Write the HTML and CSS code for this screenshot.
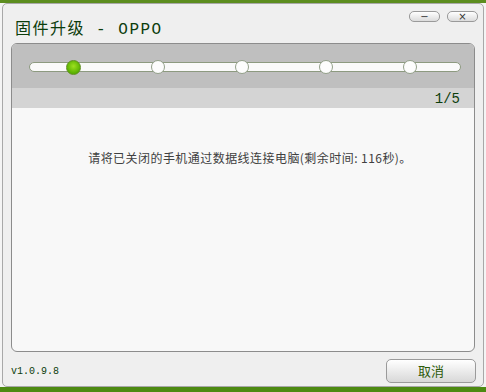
FILE: index.html
```html
<!DOCTYPE html>
<html>
<head>
    <title>固件升级 - OPPO</title>
    <link rel="stylesheet" href="styles.css">
</head>
<body>
    <div class="desktop-top"></div>
    <div class="window">
        <div class="titlebar">
            <span class="title">固件升级 - OPPO</span>
            <div class="win-buttons">
                <button class="win-btn">&minus;</button>
                <button class="win-btn">&times;</button>
            </div>
        </div>

        <div class="panel">
            <div class="steps">
                <div class="track">
                    <span class="knob active"></span>
                    <span class="knob"></span>
                    <span class="knob"></span>
                    <span class="knob"></span>
                    <span class="knob"></span>
                </div>
            </div>
            <div class="step-count">1/5</div>
            <div class="content">
                <p class="message">请将已关闭的手机通过数据线连接电脑(剩余时间: 116秒)。</p>
            </div>
        </div>

        <div class="footer">
            <span class="version">v1.0.9.8</span>
            <button class="cancel">取消</button>
        </div>
    </div>
    <div class="desktop-bottom"></div>
</body>
</html>
```

FILE: styles.css
```css
body {
    margin: 0;
    width: 486px;
    height: 392px;
    background-color: #f4f4f4;
    font-family: "SimSun", "Noto Sans CJK SC", sans-serif;
    overflow: hidden;
}

.desktop-top {
    height: 3px;
    background-color: #5c8d1f;
}

.desktop-bottom {
    height: 5px;
    background-color: #4d8a12;
}

.window {
    height: 384px;
    margin: 0 2px 0 2px;
    background-color: #efefef;
    border: 1px solid #a8a8a8;
    border-radius: 5px;
    box-sizing: border-box;
    display: flex;
    flex-direction: column;
    padding: 0 8px 0 8px;
}

.titlebar {
    display: flex;
    justify-content: space-between;
    align-items: flex-start;
    height: 39px;
}

.title {
    margin: 11px 0 0 4px;
    font-family: "Liberation Mono", "Noto Sans CJK SC", monospace;
    font-size: 16px;
    color: #0c3d0c;
    letter-spacing: 1.5px;
}

.win-buttons {
    display: flex;
    gap: 7px;
    margin-top: 7px;
    margin-right: -3px;
}

.win-btn {
    width: 31px;
    height: 11px;
    padding: 0;
    border: 1px solid #9a9a9a;
    border-radius: 5px;
    background: linear-gradient(#ffffff, #dcdcdc);
    font-family: "DejaVu Sans", sans-serif;
    font-size: 10px;
    line-height: 8px;
    color: #333;
}

.panel {
    flex: 1;
    border: 1px solid #8c8c8c;
    border-radius: 6px;
    background-color: #f8f8f8;
    display: flex;
    flex-direction: column;
    overflow: hidden;
}

.steps {
    height: 44px;
    background-color: #bfbfbf;
    display: flex;
    align-items: center;
    padding: 2px 13px 0 17px;
    box-sizing: border-box;
}

.track {
    flex: 1;
    height: 8px;
    background-color: #fafafa;
    border: 1px solid #8d9a80;
    border-radius: 5px;
    display: flex;
    justify-content: space-between;
    align-items: center;
    padding: 0 43px 0 36px;
}

.knob {
    width: 14px;
    height: 14px;
    border-radius: 50%;
    background-color: #fdfdfd;
    border: 1px solid #93a08a;
    box-sizing: border-box;
}

.knob.active {
    width: 15px;
    height: 15px;
    background: radial-gradient(circle at 50% 40%, #9ee020, #58b000 70%);
    border-color: #5f8f20;
}

.step-count {
    height: 20px;
    background-color: #d4d4d4;
    text-align: right;
    padding-right: 14px;
    font-family: "Liberation Mono", monospace;
    font-size: 14px;
    line-height: 22px;
    color: #0c3d0c;
}

.content {
    flex: 1;
}

.message {
    margin: 41px 0 0 0;
    text-align: center;
    font-size: 12px;
    letter-spacing: 0.45px;
    color: #404040;
    padding-left: 14px;
}

.footer {
    height: 34px;
    display: flex;
    justify-content: space-between;
    align-items: center;
    padding-top: 3px;
    box-sizing: border-box;
}

.version {
    font-family: "Liberation Mono", monospace;
    font-size: 10px;
    color: #0c3d0c;
    margin-top: 2px;
}

.cancel {
    width: 90px;
    height: 24px;
    margin-right: -1px;
    border: 1px solid #9a9a9a;
    border-radius: 5px;
    background: linear-gradient(#ffffff, #d8d8d8);
    font-family: "Noto Sans CJK SC", sans-serif;
    font-size: 13px;
    color: #2d5a0a;
}
```
